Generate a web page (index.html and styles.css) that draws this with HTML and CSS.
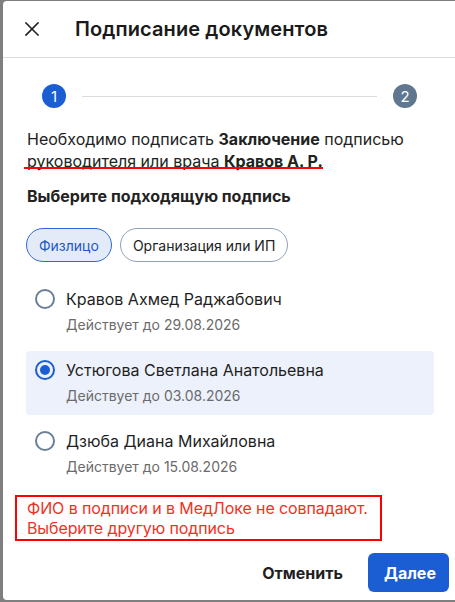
FILE: index.html
```html
<!DOCTYPE html>
<html lang="ru">
<head>
<meta charset="utf-8">
<link rel="stylesheet" href="styles.css">
</head>
<body>
<div class="dialog">
  <header class="header">
    <button class="close" aria-label="Закрыть">
      <svg width="16" height="16" viewBox="0 0 16 16"><path d="M2 2 L14 14 M14 2 L2 14" stroke="#222" stroke-width="1.6" fill="none" stroke-linecap="square"/></svg>
    </button>
    <h1 class="title">Подписание документов</h1>
  </header>
  <div class="content">
    <div class="stepper">
      <span class="step step-active">1</span>
      <span class="step-line"></span>
      <span class="step step-next">2</span>
    </div>
    <p class="intro">Необходимо подписать <b>Заключение</b> подписью руководителя или врача <b>Кравов А. Р.</b></p>
    <h2 class="subtitle">Выберите подходящую подпись</h2>
    <div class="chips">
      <span class="chip chip-active">Физлицо</span>
      <span class="chip">Организация или ИП</span>
    </div>
    <ul class="list">
      <li class="item">
        <span class="radio"></span>
        <div class="item-text">
          <div class="name">Кравов Ахмед Раджабович</div>
          <div class="valid">Действует до 29.08.2026</div>
        </div>
      </li>
      <li class="item item-selected">
        <span class="radio radio-on"></span>
        <div class="item-text">
          <div class="name">Устюгова Светлана Анатольевна</div>
          <div class="valid">Действует до 03.08.2026</div>
        </div>
      </li>
      <li class="item">
        <span class="radio"></span>
        <div class="item-text">
          <div class="name">Дзюба Диана Михайловна</div>
          <div class="valid">Действует до 15.08.2026</div>
        </div>
      </li>
    </ul>
    <div class="error">ФИО в подписи и в МедЛоке не совпадают.<br>Выберите другую подпись</div>
    <div class="actions">
      <button class="btn btn-text">Отменить</button>
      <button class="btn btn-primary">Далее</button>
    </div>
  </div>
</div>
</body>
</html>
```

FILE: styles.css
```css
* { box-sizing: border-box; }
html, body { margin: 0; padding: 0; }
body {
  background: #7f7f7f;
  font-family: Inter, "Noto Sans", sans-serif;
  color: #1f1f1f;
  width: 455px;
  height: 602px;
  overflow: hidden;
}
.dialog {
  margin: 1px 0 0 3px;
  width: 460px;
  height: 599px;
  background: #fff;
  border-radius: 4px;
}
.header {
  height: 57px;
  border-bottom: 1px solid #dcdcdc;
  display: flex;
  align-items: center;
  padding-left: 19px;
}
.close {
  border: 0;
  background: none;
  padding: 0;
  width: 20px;
  height: 20px;
  display: flex;
  align-items: center;
  justify-content: center;
  margin-right: 33px;
}
.title {
  margin: 0;
  font-size: 20px;
  font-weight: 600;
  color: #1a1a1a;
  letter-spacing: 0.1px;
}
.content {
  padding: 0 0 0 24px;
  width: 455px;
}
.stepper {
  display: flex;
  align-items: center;
  margin-top: 26px;
  padding-left: 15px;
  width: 390px;
}
.step {
  width: 24px;
  height: 24px;
  border-radius: 50%;
  color: #fff;
  font-size: 15px;
  display: flex;
  align-items: center;
  justify-content: center;
  flex: none;
}
.step-active { background: #1b5dd3; }
.step-next { background: #5f7890; }
.step-line {
  flex: 1;
  height: 1px;
  background: #dcdcdc;
  margin: 0 16px;
}
.intro {
  position: relative;
  margin: 20px 0 0;
  font-size: 16px;
  line-height: 22px;
  width: 390px;
  color: #222;
}
.intro b { font-weight: 700; }
.intro::after {
  content: "";
  position: absolute;
  left: -3px;
  top: 39px;
  width: 299px;
  height: 2px;
  background: #ff0000;
}
.subtitle {
  margin: 13px 0 0;
  font-size: 16px;
  line-height: 22px;
  font-weight: 700;
  color: #222;
}
.chips {
  display: flex;
  gap: 8px;
  margin-top: 21px;
  margin-left: -1px;
}
.chip {
  height: 34px;
  padding: 0 12px;
  border-radius: 17px;
  border: 1px solid #90a2b8;
  display: flex;
  align-items: center;
  font-size: 14px;
  color: #222;
}
.chip-active {
  background: #e4ebf8;
  border-color: #2d6ad8;
  color: #1c58c6;
}
.list {
  list-style: none;
  margin: 18px 0 0;
  padding: 0;
  display: flex;
  flex-direction: column;
  gap: 7px;
  margin-left: -1px;
  width: 408px;
}
.item {
  display: flex;
  align-items: flex-start;
  padding: 8px 9px;
  border-radius: 4px;
  height: 64px;
}
.item-selected { background: #ecf1fb; }
.radio {
  width: 20px;
  height: 20px;
  border-radius: 50%;
  border: 2px solid #6a7f97;
  flex: none;
  margin-top: 1px;
  margin-right: 11px;
  position: relative;
}
.radio-on { border-color: #1b5dd3; }
.radio-on::after {
  content: "";
  position: absolute;
  left: 3px;
  top: 3px;
  width: 10px;
  height: 10px;
  border-radius: 50%;
  background: #1b5dd3;
}
.name {
  font-size: 16px;
  line-height: 22px;
  color: #1f1f1f;
}
.valid {
  margin-top: 5px;
  font-size: 14px;
  line-height: 20px;
  color: #6b6b6b;
}
.error {
  margin: 9px 0 0 -12px;
  width: 367px;
  border: 2px solid #ff0000;
  padding: 1px 6px 1px 10px;
  font-size: 16px;
  line-height: 20px;
  color: #f03226;
  white-space: nowrap;
  letter-spacing: -0.1px;
}
.actions {
  display: flex;
  justify-content: flex-end;
  gap: 9px;
  margin-top: 12px;
  width: 422px;
}
.btn {
  border: 0;
  font-family: inherit;
  font-size: 16px;
  font-weight: 700;
  height: 39px;
  border-radius: 6px;
  padding: 0 16px;
}
.btn-text { background: none; color: #1f1f1f; }
.btn-primary { background: #1b5dd3; color: #fff; width: 81px; }
```
